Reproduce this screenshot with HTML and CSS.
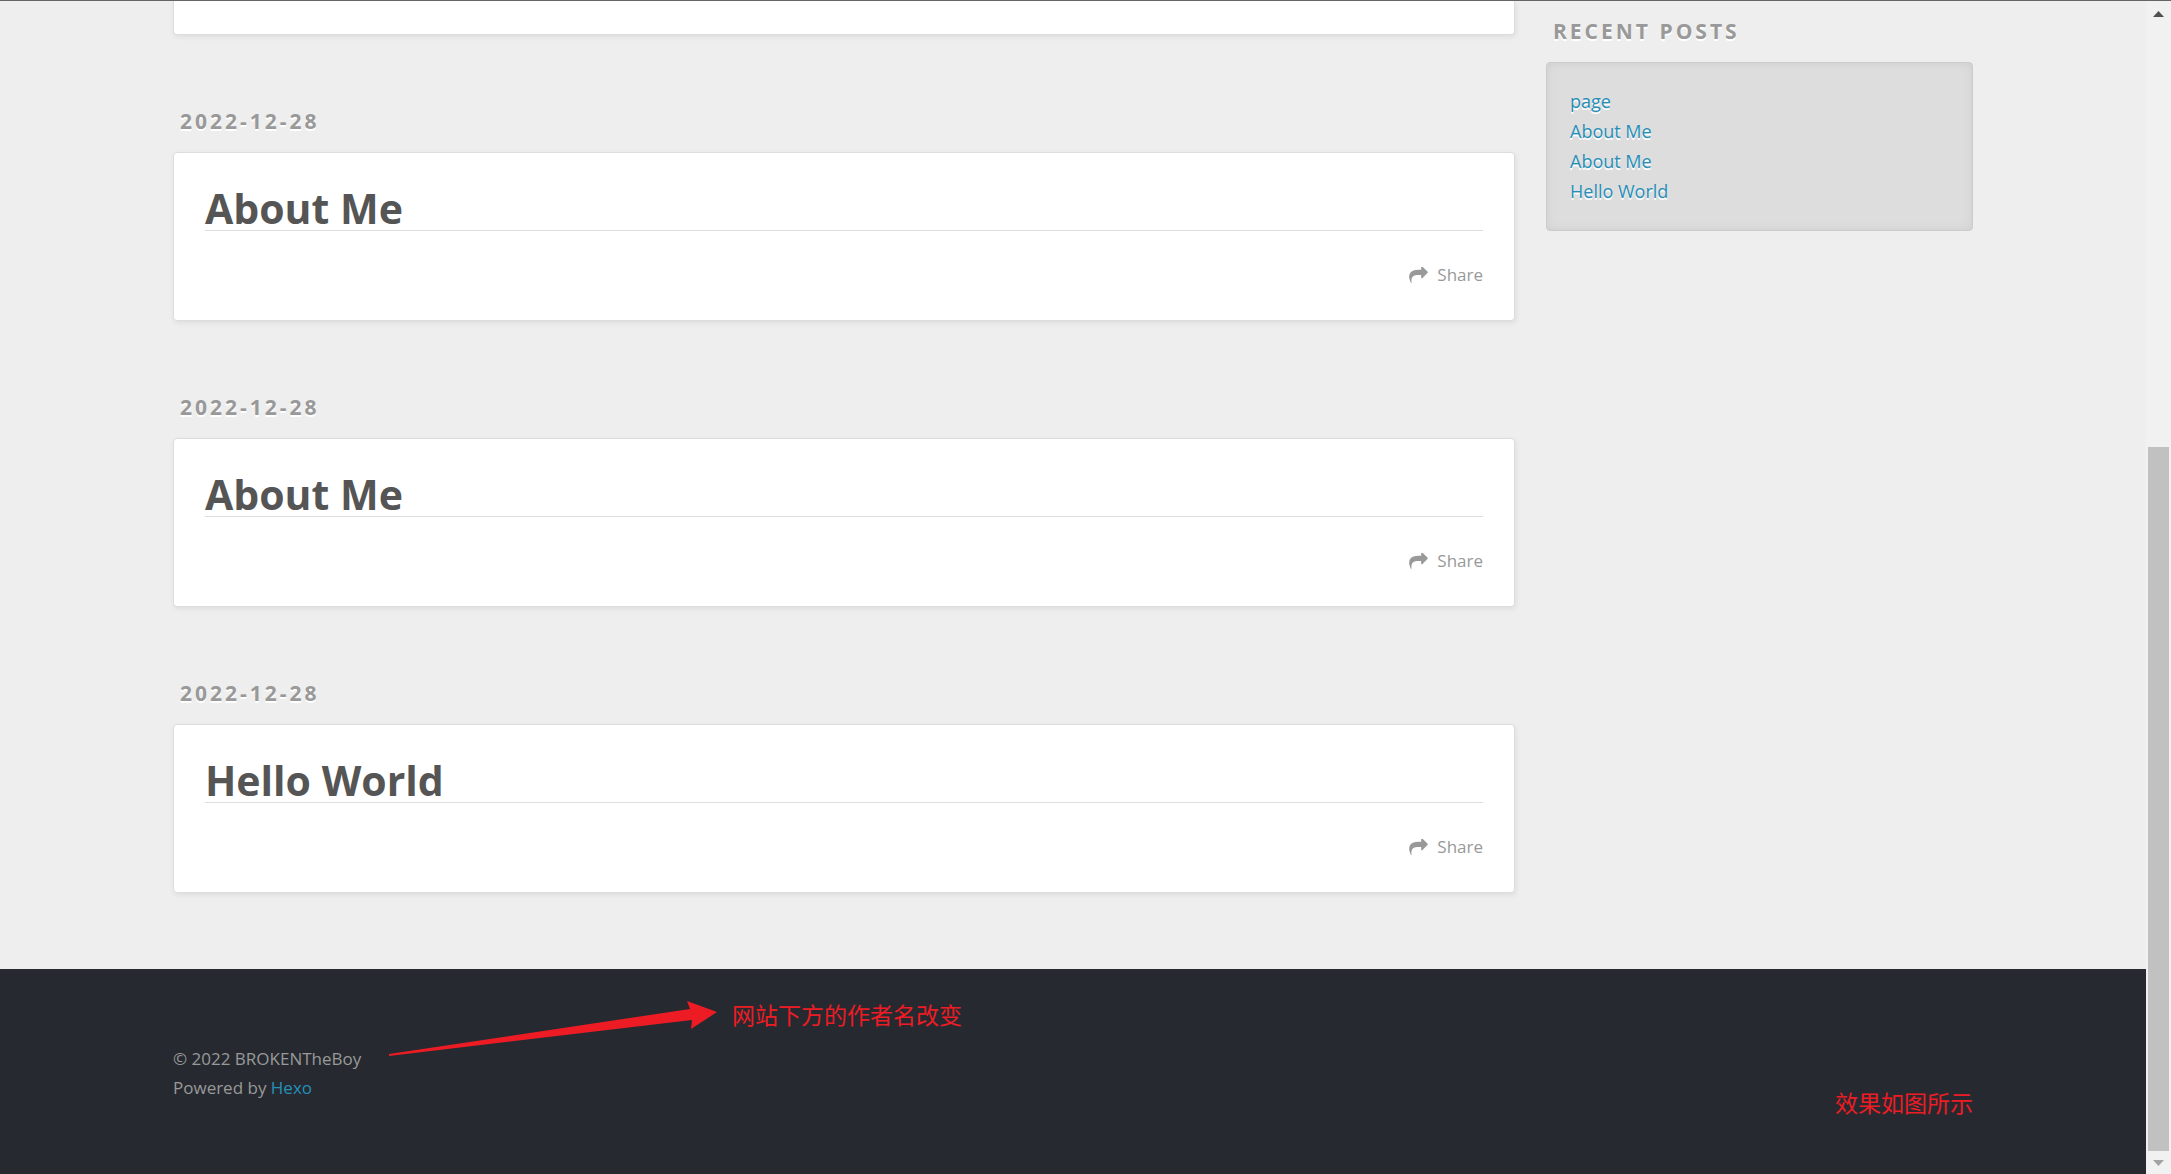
FILE: index.html
```html
<!DOCTYPE html>
<html lang="en">
<head>
<meta charset="utf-8">
<title>Hexo</title>
<link rel="stylesheet" href="styles.css">
</head>
<body>
<svg class="defs" width="0" height="0" aria-hidden="true">
  <symbol id="share" viewBox="0 128 1792 1536"><path d="M1792 640q0 26-19 45l-512 512q-19 19-45 19t-45-19-19-45v-256h-224q-98 0-175.500 6t-154 21.500-133 42.500-105.500 69.500-80 101-48.500 138.500-17.500 181q0 55 5 123 0 6 2.500 23.500t2.500 26.500q0 15-8.500 25t-23.500 10q-16 0-28-17-7-9-13-22t-13.500-30-10.500-24q-127-285-127-451 0-199 53-333 162-403 875-403h224v-256q0-26 19-45t45-19 45 19l512 512q19 19 19 45z"/></symbol>
</svg>
<div class="page">
  <div class="outer columns">
    <main class="posts">
      <div class="card card-end"></div>
      <article class="post">
        <time class="label" datetime="2022-12-28">2022-12-28</time>
        <div class="card">
          <h1 class="title">About Me</h1>
          <button class="share" type="button"><svg class="icon" aria-hidden="true"><use href="#share"/></svg>Share</button>
        </div>
      </article>
      <article class="post">
        <time class="label" datetime="2022-12-28">2022-12-28</time>
        <div class="card">
          <h1 class="title">About Me</h1>
          <button class="share" type="button"><svg class="icon" aria-hidden="true"><use href="#share"/></svg>Share</button>
        </div>
      </article>
      <article class="post">
        <time class="label" datetime="2022-12-28">2022-12-28</time>
        <div class="card">
          <h1 class="title">Hello World</h1>
          <button class="share" type="button"><svg class="icon" aria-hidden="true"><use href="#share"/></svg>Share</button>
        </div>
      </article>
    </main>
    <aside class="sidebar">
      <h3 class="label">RECENT POSTS</h3>
      <ul class="widget">
        <li><a href="#">page</a></li>
        <li><a href="#">About Me</a></li>
        <li><a href="#">About Me</a></li>
        <li><a href="#">Hello World</a></li>
      </ul>
    </aside>
  </div>
  <footer class="footer">
    <div class="outer footer-info">
      <p>© 2022 BROKENTheBoy</p>
      <p>Powered by <a href="#">Hexo</a></p>
      <svg class="arrow" viewBox="389 1001 328 55" aria-hidden="true"><path d="M389 1054L690 1009L687 1001L717 1012L691 1029L692 1020L389 1056Z"/></svg>
      <span class="note note-author" lang="zh">网站下方的作者名改变</span>
      <span class="note note-result" lang="zh">效果如图所示</span>
    </div>
  </footer>
</div>
<div class="scrollbar" aria-hidden="true">
  <svg class="tick" viewBox="0 0 11 6"><path class="up" d="M0 6L5.500 0L11 6Z"/></svg>
  <div class="track"><div class="thumb"></div></div>
  <svg class="tick" viewBox="0 0 11 6"><path class="down" d="M0 0L11 0L5.500 6Z"/></svg>
</div>
</body>
</html>
```
FILE: styles.css
```css
* { box-sizing: border-box; }

body {
  margin: 0;
  display: flex;
  min-height: 100vh;
  border-top: 1px solid #676466;
  background: #eee;
  color: #999;
  font: 17px/29px "Open Sans", "Noto Sans", "Noto Sans CJK SC", sans-serif;
}

a { color: #258fb8; text-decoration: none; }
h1, h3, p, ul { margin: 0; padding: 0; }
.defs { position: absolute; }

.page {
  flex: 1;
  display: flex;
  flex-direction: column;
}

.outer {
  width: 100%;
  max-width: 1800px;
  margin: 0 auto;
}

.columns {
  display: grid;
  grid-template-columns: 1342fr 427fr;
  gap: 31px;
  padding-bottom: 76px;
}

.label {
  display: block;
  padding-left: 7px;
  color: #999;
  font-size: 21px;
  font-weight: 700;
  line-height: 30px;
  letter-spacing: 3px;
  text-shadow: 0 2px #fff;
}

.post { padding-top: 71px; }
.post .label { margin-bottom: 16px; }

.card {
  padding: 31px;
  border: 1px solid #ddd;
  border-radius: 4px;
  background: #fff;
  box-shadow: 1px 2px 5px #ddd;
  display: flex;
  flex-direction: column;
}

.card-end {
  padding: 0 0 33px;
  border-top: 0;
  border-radius: 0 0 4px 4px;
}

.title {
  height: 47px;
  border-bottom: 1px solid #ddd;
  color: #555;
  font-size: 41px;
  font-weight: 700;
  line-height: 48px;
}

.share {
  display: flex;
  align-items: center;
  align-self: flex-end;
  gap: 9px;
  margin-top: 29px;
  padding: 0;
  border: 0;
  background: none;
  color: inherit;
  font: inherit;
}

.icon {
  width: 19px;
  height: 16px;
  fill: #999;
}

.sidebar { padding-top: 15px; }

.widget {
  margin-top: 16px;
  padding: 23px 23px 24px;
  border: 1px solid #ccc;
  border-radius: 4px;
  background: #ddd;
  box-shadow: inset 0 0 8px #ccc;
  font-size: 18px;
  line-height: 30px;
  text-shadow: 0 2px #fff;
  list-style: none;
}

.footer {
  flex: 1;
  padding: 75px 0 72px;
  background: #262a30;
}

.footer-info { position: relative; }

/* Hand-drawn notes over the footer */
.arrow {
  position: absolute;
  left: 216px;
  top: -43px;
  width: 328px;
  height: 55px;
  fill: #ed1c24;
}

.note {
  position: absolute;
  color: #ed1c24;
  font-family: "Noto Sans CJK SC", sans-serif;
  font-size: 23px;
  line-height: 30px;
  white-space: nowrap;
}

.note-author { left: 559px; top: -45px; }
.note-result { right: 0; top: 43px; }

.scrollbar {
  width: 25px;
  background: #f1f1f1;
  display: flex;
  flex-direction: column;
  align-items: center;
  padding: 10px 0 8px;
}

.tick { width: 11px; height: 6px; }
.up { fill: #505050; }
.down { fill: #a3a3a3; }

.track {
  flex: 1;
  width: 21px;
  margin: 8px 0 9px;
  display: flex;
  align-items: flex-end;
}

.thumb {
  width: 100%;
  height: 62.5%;
  background: #c1c1c1;
}
```
